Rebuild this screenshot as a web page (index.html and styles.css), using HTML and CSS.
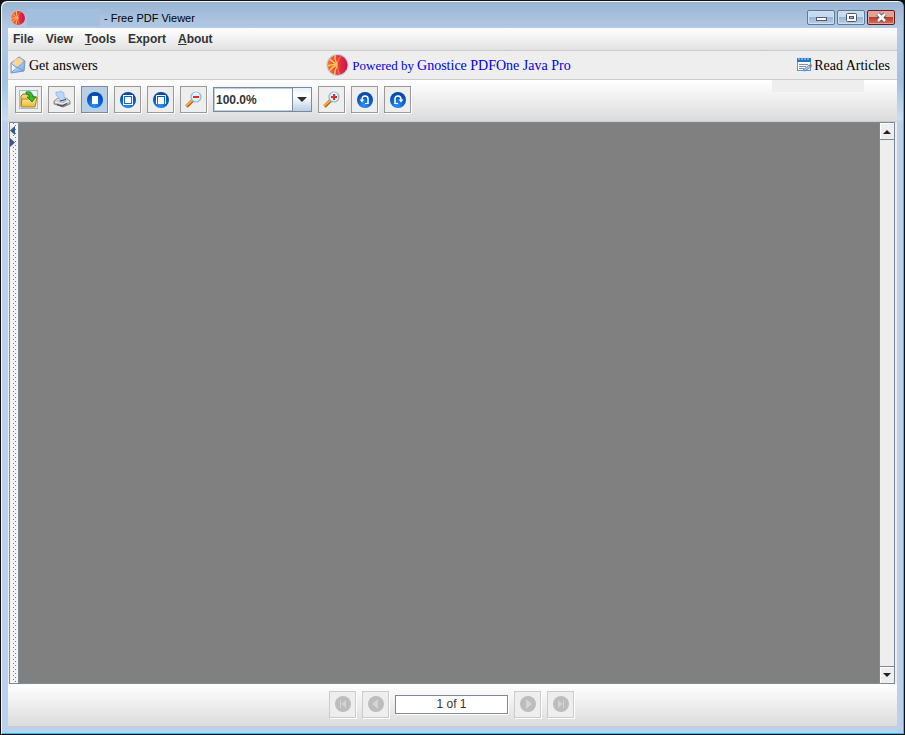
FILE: index.html
```html
<!DOCTYPE html>
<html lang="en">
<head>
<meta charset="utf-8">
<title>Free PDF Viewer</title>
<link rel="stylesheet" href="styles.css">
</head>
<body>
<svg class="defs" width="0" height="0" aria-hidden="true">
  <defs>
    <radialGradient id="ball" cx=".45" cy=".8" r=".8"><stop offset="0" stop-color="#2d94f5"/><stop offset=".5" stop-color="#0c62cf"/><stop offset="1" stop-color="#06419f"/></radialGradient>
    <linearGradient id="red" x1="0" x2="1"><stop offset="0" stop-color="#f8792a"/><stop offset=".5" stop-color="#e93b3c"/><stop offset="1" stop-color="#c91250"/></linearGradient>
    <linearGradient id="gold" x1="0" y1="0" x2="0" y2="1"><stop offset="0" stop-color="#fff3a4"/><stop offset="1" stop-color="#e9b638"/></linearGradient>
    <linearGradient id="sky" x1="0" y1="0" x2="1" y2="1"><stop offset="0" stop-color="#e9f7ff"/><stop offset="1" stop-color="#69a7e6"/></linearGradient>
    <linearGradient id="metal" x1="0" y1="0" x2="0" y2="1"><stop offset="0" stop-color="#f4f4f6"/><stop offset="1" stop-color="#83838c"/></linearGradient>
    <symbol id="logo" viewBox="0 0 24 24">
      <circle cx="12" cy="12" r="11.5" fill="#c3cbe0"/><circle cx="12" cy="12" r="10.5" fill="url(#red)"/>
      <path d="M12 12Q8 5 10 2M12 12Q6 8 4 6M12 12Q5 11 2 13M12 12Q6 14 4 18M12 12Q9 17 9 22" fill="none" stroke="#ffc45f" stroke-width="1.5"/>
      <path d="M12 12Q12 5 16 3M12 12Q12 17 14 22" fill="none" stroke="#f78a65" stroke-width="1"/>
    </symbol>
    <symbol id="glass" viewBox="0 0 19 19">
      <path d="M9 10L2.500 16.500" stroke="#a8601c" stroke-width="3.500"/><path d="M8.500 10L2 16" stroke="#ffa93a" stroke-width="2"/>
      <circle cx="12" cy="7" r="5" fill="#d9f1ff" stroke="#8fb6cf" stroke-width="1.200"/><path d="M9 4Q12 2 15 4" fill="none" stroke="#fff"/>
    </symbol>
    <symbol id="first" viewBox="0 0 18 18"><circle cx="9" cy="9" r="8" fill="#bdbdbd"/><path d="M6.500 5V13" stroke="#d4d4d4"/><path d="M12 5L7.500 9L12 13Z" fill="#d4d4d4"/></symbol>
    <symbol id="prev" viewBox="0 0 18 18"><circle cx="9" cy="9" r="8" fill="#bdbdbd"/><path d="M11 4V14L5 9Z" fill="#d4d4d4"/></symbol>
  </defs>
</svg>
<div class="window">
  <header class="titlebar">
    <svg class="app-icon"><use href="#logo"/></svg>
    <span class="name-patch"></span>
    <span class="title">- Free PDF Viewer</span>
    <div class="window-controls">
      <button class="control" aria-label="Minimize"><svg width="13" height="11"><rect x="1.5" y="5.5" width="10" height="3" fill="#fff" stroke="#535866"/></svg></button>
      <button class="control" aria-label="Maximize"><svg width="13" height="11"><rect x="1.5" y="1.5" width="10" height="8" rx="1" fill="#fff" stroke="#535866"/><rect x="4.500" y="4.500" width="4" height="2" fill="#9db9d8" stroke="#535866"/></svg></button>
      <button class="control close" aria-label="Close"><svg width="13" height="11"><path d="M3 2L10 9M10 2L3 9" stroke="#535866" stroke-width="4.500"/><path d="M3 2L10 9M10 2L3 9" stroke="#fff" stroke-width="2.500"/></svg></button>
    </div>
  </header>
  <main class="client">
    <nav class="menubar">
      <button>File</button><button>View</button><button><u>T</u>ools</button><button>Export</button><button><u>A</u>bout</button>
    </nav>
    <div class="linkbar">
      <a class="answers" href="#">
        <svg width="16" height="18"><path d="M1 7L9 1L15 5L14 15L1 17Z" fill="url(#sky)" stroke="#7a91cf"/><path d="M3 8Q4 2 9 2Q13 3 13 7L8 11Z" fill="#fbd58d"/><path d="M1 7L7 12L15 5M1 17L7 11L14 15" fill="none" stroke="#7a98da"/><path d="M2 9V15L6 12Z" fill="#f4fbff"/></svg>
        <span>Get answers</span>
      </a>
      <a class="powered" href="#"><svg class="brand"><use href="#logo"/></svg><span class="by">Powered by</span><span>Gnostice PDFOne Java Pro</span></a>
      <a class="articles" href="#">
        <svg width="17" height="16"><rect x="1.500" y="1.500" width="13" height="12" fill="#f8fcff" stroke="#5b99d2"/><path d="M1 1H15V5H1Z" fill="#2674c5"/><path d="M3 0V3M6 0V3M9 0V3M12 0V3" stroke="#b9e1ff"/><path d="M3 7.500H12M3 9.500H10M3 11.500H8" stroke="#8192a4"/><path d="M7 13L13 8L15 10L9 14Z" fill="#8fc9f4" stroke="#4f78ad" stroke-width=".7"/><path d="M13 8L15 7L16 9L15 10Z" fill="#e24b2e"/></svg>
        <span>Read Articles</span>
      </a>
    </div>
    <div class="toolbar">
      <button class="tool" aria-label="Open"><svg width="19" height="19"><rect x=".5" y=".5" width="18" height="18" fill="#eaf2f5" stroke="#9dc0da"/><path d="M2 16V6L4 4H8L10 6H15V16Z" fill="#f4d266" stroke="#aa791c"/><path d="M2 17L3 9H10L12 7H18L16 17Z" fill="url(#gold)" stroke="#b58019"/><path d="M7 2Q13 0 14 7H17L13 12L8 7H11Q11 4 7 4Z" fill="#35bd32" stroke="#147c18" stroke-width=".8"/></svg></button>
      <button class="tool" aria-label="Print"><svg width="19" height="19"><path d="M2 11L6 8H14L18 11V14L11 17L2 14Z" fill="url(#metal)" stroke="#76767e" stroke-width=".8"/><path d="M4 2Q7 3 8 1L12 3Q11 6 14 10L8 11Q7 7 4 5Z" fill="#b8d7ff" stroke="#8da8d7" stroke-width=".7"/><path d="M3 12L11 14L17 11" fill="none" stroke="#fff"/><path d="M5 14.500L10 16L15 13.500" fill="none" stroke="#4b4f59" stroke-width="1.200"/><path d="M8 11L14 9.500" stroke="#484d57"/></svg></button>
      <button class="tool selected" aria-label="Actual size"><svg width="18" height="18"><circle cx="9" cy="9" r="8" fill="url(#ball)"/><rect x="6" y="5" width="6" height="8" fill="#fff"/></svg></button>
      <button class="tool" aria-label="Fit page"><svg width="18" height="18"><circle cx="9" cy="9" r="8" fill="url(#ball)"/><rect x="4.500" y="4.500" width="9" height="9" fill="#1768c9" stroke="#fff"/><rect x="6" y="6" width="6" height="6" fill="#fff"/></svg></button>
      <button class="tool" aria-label="Fit width"><svg width="18" height="18"><circle cx="9" cy="9" r="8" fill="url(#ball)"/><path d="M4.500 13V4.500H13.500V13" fill="none" stroke="#fff"/><rect x="6" y="6" width="6" height="7" fill="#fff"/></svg></button>
      <button class="tool" aria-label="Zoom out"><svg width="19" height="19"><use href="#glass"/><path d="M9 7H15" stroke="#e72c20" stroke-width="2"/></svg></button>
      <div class="combo"><input aria-label="Zoom level" value="100.0%"><button aria-label="Choose zoom"><svg width="12" height="6"><path d="M1 0H11L6 5Z" fill="#303030"/></svg></button></div>
      <button class="tool" aria-label="Zoom in"><svg width="19" height="19"><use href="#glass"/><path d="M9 7H15M12 4V10" stroke="#e72c20" stroke-width="2"/></svg></button>
      <button class="tool" aria-label="Rotate left"><svg width="18" height="18"><circle cx="9" cy="9" r="8" fill="url(#ball)"/><path d="M12 13V8Q12 5 9 5Q6 5 6 9" fill="none" stroke="#fff" stroke-width="1.500"/><path d="M3.500 8.500H8.500L6 11.500Z" fill="#fff"/><path d="M9 12.500H12" stroke="#fff"/></svg></button>
      <button class="tool" aria-label="Rotate right"><svg width="18" height="18"><circle cx="9" cy="9" r="8" fill="url(#ball)"/><path d="M6 13V8Q6 5 9 5Q12 5 12 9" fill="none" stroke="#fff" stroke-width="1.500"/><path d="M9.500 8.500H14.500L12 11.500Z" fill="#fff"/><path d="M6 12.500H9" stroke="#fff"/></svg></button>
      <span class="toolbar-patch"></span>
    </div>
    <section class="viewer">
      <div class="divider"><button aria-label="Collapse sidebar"><svg width="5" height="9"><path d="M5 0V9L0 4.500Z" fill="#385691"/></svg></button><button aria-label="Expand sidebar"><svg width="5" height="9"><path d="M0 0V9L5 4.500Z" fill="#385691"/></svg></button></div>
      <div class="page-area"></div>
      <div class="scrollbar"><button aria-label="Scroll up"><svg width="10" height="5"><path d="M1 5H9L5 1Z" fill="#222"/></svg></button><div class="track"></div><button aria-label="Scroll down"><svg width="10" height="5"><path d="M1 0H9L5 4Z" fill="#222"/></svg></button></div>
    </section>
    <footer class="pager">
      <button class="tool" disabled aria-label="First page"><svg width="18" height="18"><use href="#first"/></svg></button>
      <button class="tool" disabled aria-label="Previous page"><svg width="18" height="18"><use href="#prev"/></svg></button>
      <input aria-label="Page" value="1 of 1">
      <button class="tool" disabled aria-label="Next page"><svg class="flip" width="18" height="18"><use href="#prev"/></svg></button>
      <button class="tool" disabled aria-label="Last page"><svg class="flip" width="18" height="18"><use href="#first"/></svg></button>
    </footer>
  </main>
</div>
</body>
</html>
```
FILE: styles.css
```css
* { box-sizing: border-box; }
body { margin: 0; background: #101010; font: 12px "Liberation Sans", Arial, sans-serif; color: #333; }
button, input { font: inherit; color: inherit; margin: 0; padding: 0; border-radius: 0; }
svg { display: block; flex: none; }
.defs { position: absolute; }
.window {
  height: 100vh; display: flex; flex-direction: column;
  padding: 0 7px 7px; border: 1px solid #111;
  border-radius: 7px 7px 0 0;
  box-shadow: inset 1px 1px #f1f7fc, inset -1px -1px #20c8ef;
  background: linear-gradient(#99b3d1 0, #b4cbe6 28px, #a3c1e2 80px, #c8dcf2 118px, #b9d1ec 122px, #b9d1ec);
}
.titlebar { flex: none; height: 27px; display: flex; align-items: center; padding: 6px 2px 0; color: #000; }
.title { font-size: 11px; }
.app-icon { width: 16px; height: 16px; }
.name-patch { width: 73px; height: 17px; margin: 0 4px 0 1px; background: #a3bfdf; }
.window-controls { margin-left: auto; display: flex; gap: 2px; }
.control {
  width: 28px; height: 15px; display: grid; place-items: center;
  border: 1px solid #5e7996; border-radius: 2px; box-shadow: inset 0 0 0 1px #cfe1f3;
  background: linear-gradient(#c7dbf0 50%, #99b7d8 50%, #b6d0ea);
}
.close { border-color: #641c20; box-shadow: inset 0 0 0 1px #e8a49a; background: linear-gradient(#e3a296 50%, #b93d2b 50%, #cf7561); }
.client { flex: 1; min-height: 0; display: flex; flex-direction: column; background: #eee; border-bottom: 1px solid #ccc; }
.menubar { flex: none; height: 23px; display: flex; align-items: center; gap: 12px; padding: 0 5px; background: linear-gradient(#fff, #e2e2e2); border-bottom: 1px solid #ccc; }
.menubar button { border: 0; background: none; font-weight: bold; }
.linkbar {
  flex: none; height: 29px; display: grid; grid-template-columns: 1fr auto 1fr; align-items: center; padding: 0 7px 0 2px;
  font: 14px "Liberation Serif", "Times New Roman", serif; border-bottom: 1px solid #ccc;
}
.linkbar a { display: flex; align-items: center; gap: 3px; color: #000; text-decoration: none; white-space: nowrap; }
.linkbar span { padding-top: 1px; }
.linkbar .articles { justify-self: end; gap: 1px; }
.linkbar .powered { color: #0000e8; margin-right: 3px; }
.brand { width: 23px; height: 24px; }
.by { font-size: 13px; }
.toolbar {
  flex: none; height: 42px; display: flex; align-items: center; gap: 6px; padding: 0 33px 2px 7px;
  background: linear-gradient(#fff, #dcdcdc); border-bottom: 1px solid #ccc;
}
.tool {
  width: 27px; height: 27px; display: grid; place-items: center; background: #eee;
  border: 1px solid #999; box-shadow: 1px 1px #fff;
}
.tool.selected { background: #b8cfe5; border-color: #7a8a99; }
.tool:disabled { border-color: #ccc; }
.toolbar-patch { align-self: flex-start; width: 92px; height: 12px; margin-left: auto; background: #eee; }
.combo { width: 99px; height: 25px; display: flex; border: 1px solid #7a8a99; box-shadow: inset 0 0 0 1px #b8cfe5; }
.combo input { min-width: 0; flex: 1; border: 0; background: #fff; padding: 0 1px; font-weight: bold; margin: 1px 0 1px 1px; }
.combo button { width: 19px; border: 0; border-left: 1px solid #7a8a99; display: grid; place-items: center; background: linear-gradient(#e9f0f7, #fff 35%, #b8cfe5); }
.viewer { flex: 1; min-height: 0; display: flex; margin: 0 2px 0 1px; border: 1px solid #7a8a99; }
.divider {
  width: 9px; border-right: 1px solid #7a8a99; display: flex; flex-direction: column; align-items: flex-start; gap: 3px; padding-top: 3px;
  background:
    linear-gradient(#777 1px, transparent 1px) 3px 0 / 1px 4px repeat-y,
    linear-gradient(#777 1px, transparent 1px) 5px 2px / 1px 4px repeat-y,
    #f4f4f4;
}
.divider button { height: 9px; border: 0; background: #eee; }
.page-area { flex: 1; background: #808080; }
.scrollbar { width: 15px; display: flex; flex-direction: column; border-left: 1px solid #7a8a99; background: #eee; }
.scrollbar button { height: 17px; display: grid; place-items: center; background: #eee; border: 0 solid #7a8a99; border-bottom-width: 1px; box-shadow: inset 1px 1px #fff; }
.scrollbar button:last-child { border-width: 1px 0 0; }
.track { flex: 1; }
.pager { flex: none; height: 42px; display: flex; align-items: center; justify-content: center; gap: 6px; padding: 0 2px 2px 0; background: linear-gradient(#fff, #dcdcdc); }
.pager input { width: 113px; height: 19px; text-align: center; border: 1px solid #7a8a99; box-shadow: 1px 1px #fff; background: #fff; }
.flip { transform: scaleX(-1); }
```
